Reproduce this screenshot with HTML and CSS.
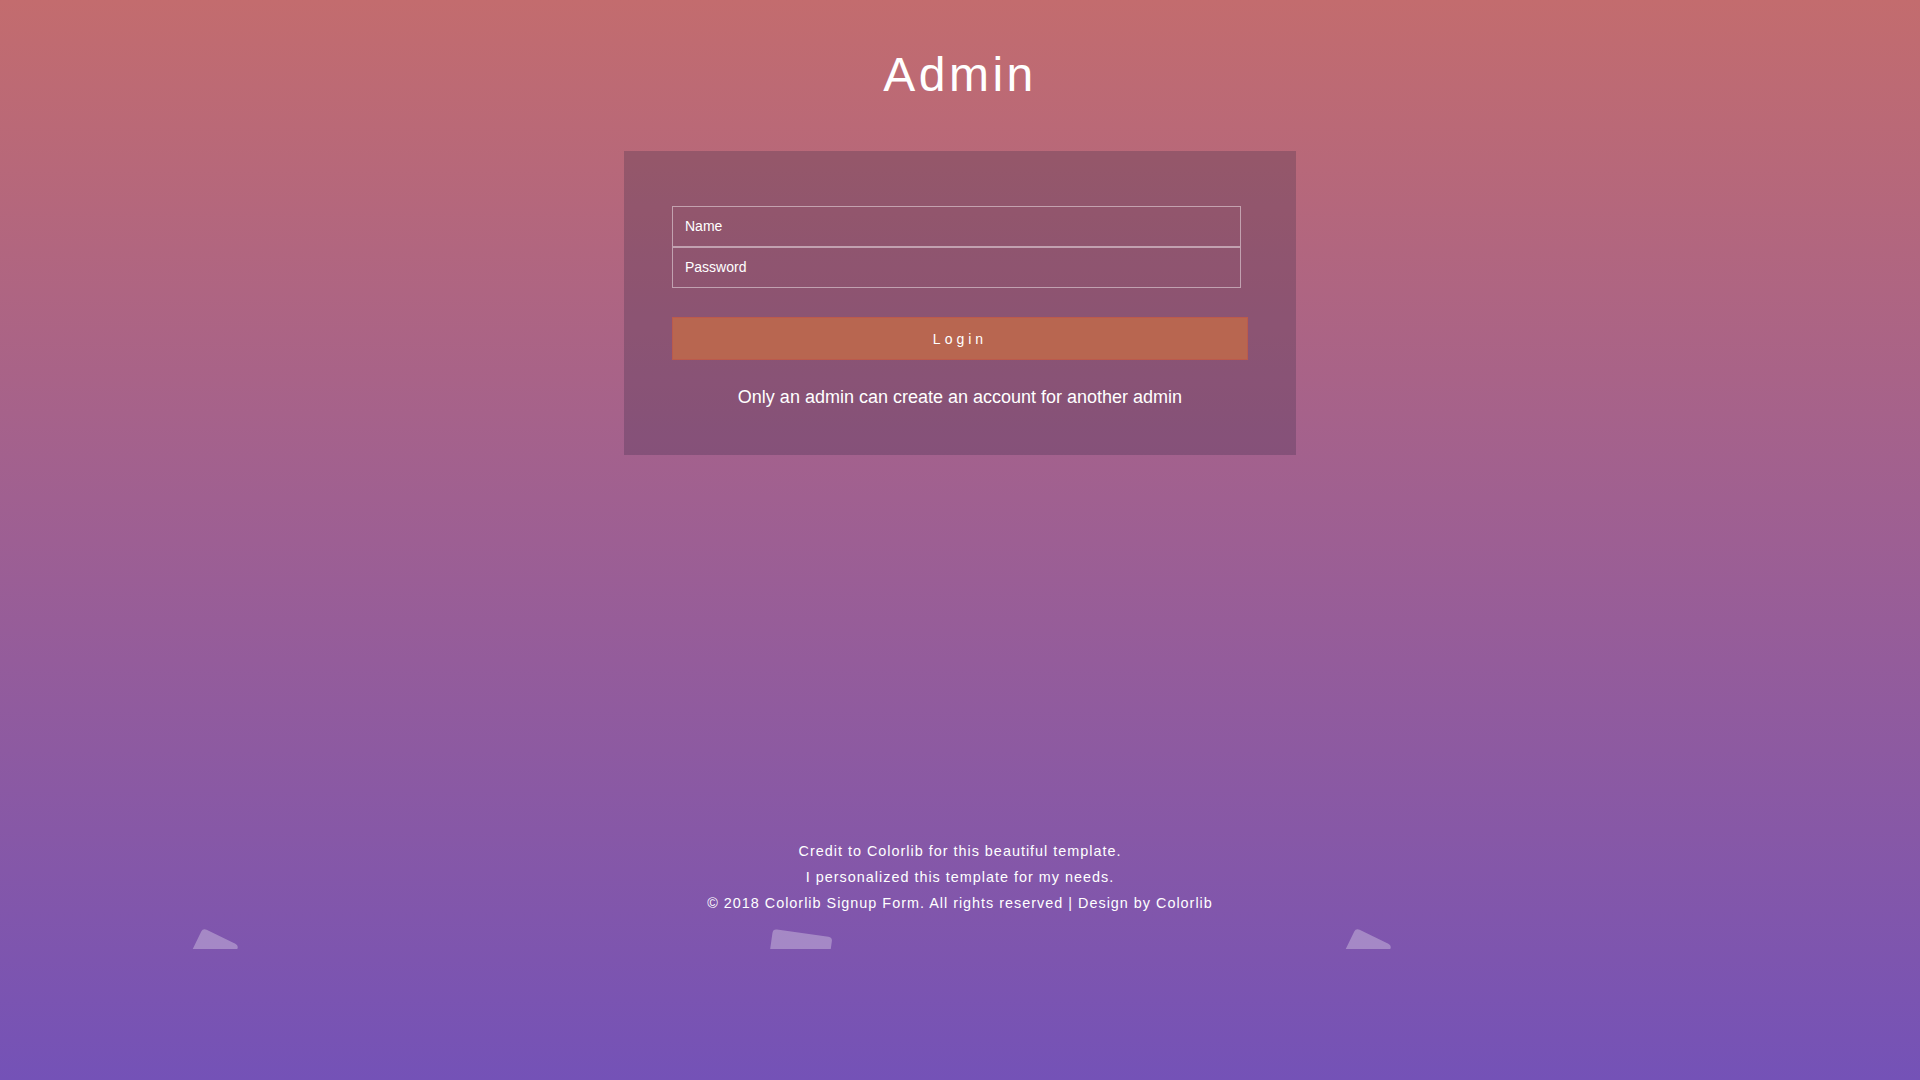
FILE: index.html
```html
<!DOCTYPE html>
<html lang="en">
<head>
<meta charset="utf-8">
<title>Admin</title>
<link rel="stylesheet" href="styles.css">
</head>
<body>
<div class="bubbles" aria-hidden="true">
  <span class="bubble b1"></span>
  <span class="bubble b2"></span>
  <span class="bubble b3"></span>
</div>
<main class="page">
  <h1 class="title">Admin</h1>
  <section class="card">
    <form class="form">
      <div class="fields">
        <input class="field" type="text" placeholder="Name">
        <input class="field" type="password" placeholder="Password">
      </div>
      <button class="btn" type="button">Login</button>
      <p class="note">Only an admin can create an account for another admin</p>
    </form>
  </section>
  <footer class="footer">
    <p>Credit to Colorlib for this beautiful template.</p>
    <p>I personalized this template for my needs.</p>
    <p>© 2018 Colorlib Signup Form. All rights reserved | Design by Colorlib</p>
  </footer>
</main>
</body>
</html>
```
FILE: styles.css
```css
* { box-sizing: border-box; }
html, body { margin: 0; padding: 0; }
body {
  min-height: 1080px;
  background: linear-gradient(to bottom, #c36c6e 0%, #9d5f93 50%, #7452b7 100%);
  font-family: "Liberation Sans", Arial, sans-serif;
  color: #fff;
  position: relative;
  overflow: hidden;
}
.page {
  position: relative;
  z-index: 1;
  display: flex;
  flex-direction: column;
  align-items: center;
  padding-top: 51px;
}
.title {
  margin: 0;
  font-size: 48px;
  line-height: 48px;
  font-weight: 400;
  letter-spacing: 3.5px;
  color: #fff;
}
.card {
  margin-top: 52px;
  width: 672px;
  height: 304px;
  padding: 55px 48px 0;
  background: rgba(42, 34, 62, 0.25);
}
.form { display: flex; flex-direction: column; }
.fields { display: flex; flex-direction: column; }
.field {
  display: block;
  width: 569px;
  height: 41px;
  margin: 0;
  padding: 0 12px 2px;
  border: 1px solid rgba(255, 255, 255, 0.45);
  background: transparent;
  font-family: "Liberation Sans", Arial, sans-serif;
  font-size: 14px;
  color: #fff;
  outline: none;
}
.field::placeholder { color: #fff; opacity: 1; }
.btn {
  margin-top: 29px;
  width: 576px;
  height: 43px;
  background: #b86650;
  border: 1px solid #bb5a4c;
  color: #fff;
  font-family: "Liberation Sans", Arial, sans-serif;
  font-size: 14px;
  letter-spacing: 4px;
  padding: 0;
  cursor: pointer;
}
.note {
  margin: 26px 0 0;
  font-size: 18px;
  line-height: 22px;
  text-align: center;
  color: #fff;
}
.footer {
  margin-top: 384px;
  text-align: center;
}
.footer p {
  margin: 0;
  font-size: 14.4px;
  line-height: 25.9px;
  letter-spacing: 1px;
  color: #fff;
}
.bubbles {
  position: absolute;
  left: 0;
  top: 0;
  width: 100%;
  height: 949px;
  overflow: hidden;
  pointer-events: none;
  z-index: 0;
}
.bubble {
  position: absolute;
  display: block;
  background: rgba(255, 255, 255, 0.3);
  border-radius: 4px;
  transform-origin: 0 0;
}
.b1 { left: 203px; top: 928px; width: 40px; height: 40px; transform: rotate(26deg); }
.b2 { left: 773px; top: 929px; width: 60px; height: 60px; transform: rotate(8deg); }
.b3 { left: 1356px; top: 928px; width: 40px; height: 40px; transform: rotate(26deg); }
```
